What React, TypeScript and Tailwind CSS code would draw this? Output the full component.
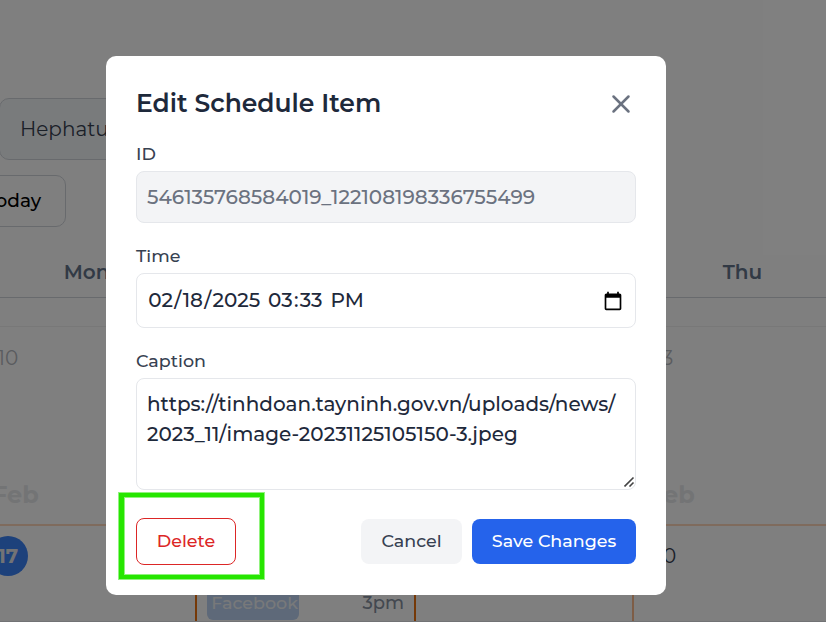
import React from "react";
import { X } from "lucide-react";

function DayCell({ day, dayClass, month, cellClass }: { day: string; dayClass: string; month?: boolean; cellClass: string }) {
  return (
    <div className={`flex flex-col pt-2.5 ${cellClass}`}>
      <div className={`flex h-10 w-10 items-center justify-center rounded-full text-[20px] ${dayClass}`}>{day}</div>
      {month && <div className="mt-[102px] pl-1 text-[24px] leading-[30px] font-bold text-[#e7e8eb]">Feb</div>}
    </div>
  );
}

function Calendar() {
  return (
    <div className="h-[622px] w-[875px] -ml-6 bg-white">
      <div className="flex flex-col pt-[98px]">
        <div className="ml-[23px] flex h-[62px] w-[300px] items-center rounded-[10px] border border-[#d1d5db] bg-[#f3f6f9] pl-5 text-[20px] text-[#374151]">
          Hephatus
        </div>
        <div className="mt-[15px] flex h-[52px] w-[90px] items-center justify-end rounded-[10px] border border-[#d1d5db] pr-6 text-[18.5px] font-medium text-black">
          Today
        </div>
        <div className="grid h-[71px] grid-cols-[219px_219px_218px_219px] border-b border-[#d1d5db] pt-[30px] pl-px text-center text-[20px] leading-[30px] font-semibold text-[#64748b]">
          <div>Mon</div>
          <div>Tue</div>
          <div>Wed</div>
          <div>Thu</div>
        </div>
        <div className="h-[29px] border-b border-[#f1f1f1]" />
        <div className="grid h-[198px] grid-cols-[219px_219px_218px_219px] pt-px">
          <DayCell day="10" dayClass="text-[#b5b8be]" month cellClass="pl-3" />
          <DayCell day="11" dayClass="text-[#b5b8be]" month cellClass="pl-3" />
          <DayCell day="12" dayClass="text-[#b5b8be]" month cellClass="pl-3" />
          <DayCell day="13" dayClass="text-[#b5b8be]" month cellClass="pl-3" />
        </div>
        <div className="-mt-px grid h-[98px] grid-cols-[219px_219px_218px_219px] border-t-2 border-b border-t-[#fed7bb] border-b-[#e5e7eb]">
          <DayCell day="17" dayClass="bg-[#3b82f6] text-[#e5e7eb] font-bold" cellClass="pl-3" />
          <div className="flex items-end justify-between border-l-2 border-[#ea7310] pr-2.5 pl-2.5 pb-px">
            <div className="flex h-[34px] w-[92px] items-center justify-end rounded-md bg-[#bcd2f2] pr-px text-[17.5px] font-medium text-[#f0f2f5]">Facebook</div>
            <div className="flex h-[34px] items-center text-[18px] font-medium text-[#8791a0]">3pm</div>
          </div>
          <div className="border-l-2 border-[#ea7310]" />
          <DayCell day="20" dayClass="text-[#374151]" cellClass="border-l-2 border-[#fdba8c] pl-2.5" />
        </div>
      </div>
    </div>
  );
}

function Label({ children }: { children: React.ReactNode }) {
  return <div className="h-[25px] text-[17.5px] leading-[25px] font-medium text-[#374151]">{children}</div>;
}

function CalendarIcon() {
  return (
    <svg width="20" height="20" viewBox="0 0 24 24" fill="#000">
      <path d="M20 3h-1V1h-2v2H7V1H5v2H4c-1.1 0-2 .9-2 2v16c0 1.1.9 2 2 2h16c1.1 0 2-.9 2-2V5c0-1.1-.9-2-2-2zm0 18H4V8h16v13z" />
    </svg>
  );
}

function DateFields() {
  return (
    <div className="-mt-0.5 whitespace-pre">
      <span className="px-[1.25px]">02</span>/<span className="px-[1.25px]">18</span>/<span className="px-[1.25px]">2025</span>{" "}
      <span className="px-[1.25px]">03</span>:<span className="px-[1.25px]">33</span>{" "}
      <span className="px-[1.25px]">PM</span>
    </div>
  );
}

export default function App() {
  return (
    <div className="relative h-[622px] w-full overflow-hidden font-['Montserrat',Inter,sans-serif]">
      <Calendar />
      <div className="absolute inset-0 bg-black/50 pt-14 pl-[106px]">
        <div className="flex h-[539px] w-[560px] flex-col rounded-[10px] bg-white px-[30px] pt-[30px]">
          <div className="flex h-[35px] items-center justify-between">
            <h2 className="text-[25px] font-semibold text-[#1e293b]">Edit Schedule Item</h2>
            <X size={30} strokeWidth={2} className="text-[#6b7280]" />
          </div>
          <div className="mt-5">
            <Label>ID</Label>
            <div className="mt-[5px] flex h-[52px] items-center rounded-lg border border-[#e5e7eb] bg-[#f3f4f6] px-2.5 text-[20px] font-medium text-[#6b7280]">
              546135768584019_122108198336755499
            </div>
          </div>
          <div className="mt-5">
            <Label>Time</Label>
            <div className="mt-[5px] flex h-[55px] items-center justify-between rounded-lg border border-[#e5e7eb] pr-3 pl-2.5 text-[20px] font-medium text-[#1e293b]">
              <DateFields />
              <CalendarIcon />
            </div>
          </div>
          <div className="mt-5">
            <Label>Caption</Label>
            <div className="relative mt-[5px] h-[112px] rounded-lg border border-[#e5e7eb] px-2.5 pt-2.5 text-[20px] leading-[30px] font-medium text-[#1e293b]">
              <div>https://tinhdoan.tayninh.gov.vn/uploads/news/</div>
              <div>2023_11/image-20231125105150-3.jpeg</div>
              <svg className="absolute right-0 bottom-0.5" width="11" height="11" viewBox="0 0 11 11" fill="none" stroke="#444" strokeWidth="1.6">
                <path d="M.5 10.5l9-9M5.5 10.5l4-4" />
              </svg>
            </div>
          </div>
          <div className="mt-7 flex h-[47px] items-center justify-between">
            <button className="h-[47px] w-[100px] rounded-lg border border-[#dc2626] text-[17.5px] font-medium text-[#dc2626]">Delete</button>
            <div className="flex gap-2.5">
              <button className="h-[45px] w-[101px] rounded-lg bg-[#f3f4f6] text-[17.5px] font-medium text-[#374151]">Cancel</button>
              <button className="h-[45px] w-[164px] rounded-lg bg-[#2563eb] text-[17.5px] font-medium text-white">Save Changes</button>
            </div>
          </div>
        </div>
        <div className="absolute top-[493px] left-[119px] h-[86px] w-[145px] border-4 border-l-5 border-[#26e600] ring-1 inset-ring-1 ring-[#26e600]/50 inset-ring-[#26e600]/50" />
      </div>
    </div>
  );
}
